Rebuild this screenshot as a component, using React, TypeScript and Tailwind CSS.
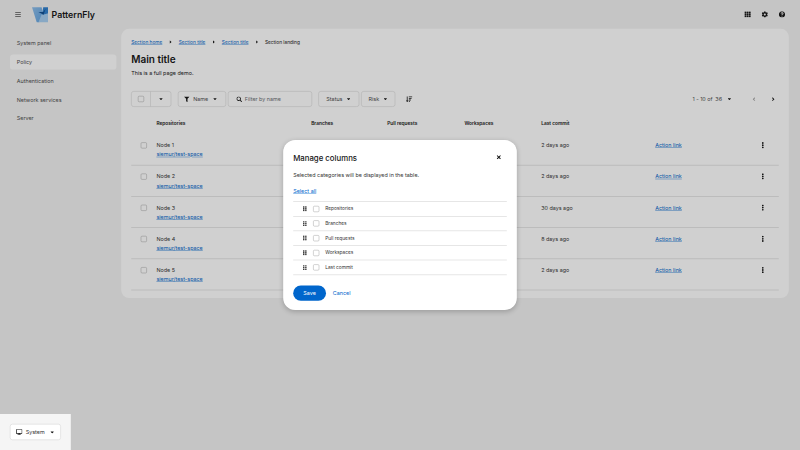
import React from 'react';
import {
  FaAngleLeft,
  FaAngleRight,
  FaBars,
  FaCaretDown,
  FaCog,
  FaDesktop,
  FaEllipsisV,
  FaFilter,
  FaGripVertical,
  FaQuestionCircle,
  FaSearch,
  FaSortAmountDown,
  FaTh,
  FaTimes,
} from 'react-icons/fa';

const navItems = ['System panel', 'Policy', 'Authentication', 'Network services', 'Server'];
const rows = [
  { name: 'Node 1', commit: '2 days ago' },
  { name: 'Node 2', commit: '2 days ago' },
  { name: 'Node 3', commit: '30 days ago' },
  { name: 'Node 4', commit: '8 days ago' },
  { name: 'Node 5', commit: '2 days ago' },
];
const columns = ['Repositories', 'Branches', 'Pull requests', 'Workspaces', 'Last commit'];
const gridCols = 'grid grid-cols-[63px_387px_190px_193px_192px_285px_268px_1fr]';

const Logo = () => (
  <svg width="40" height="40" viewBox="0 0 40 40">
    <defs>
      <linearGradient id="lg" x1="0" y1="0" x2="1" y2="1">
        <stop offset="0" stopColor="#8dbdea" />
        <stop offset="1" stopColor="#5fa2e0" />
      </linearGradient>
    </defs>
    <path d="M0 2h24l4 14-10 24h-6z" fill="url(#lg)" />
    <path d="M16 40l8-20 16-2v22z" fill="#a5cdf0" />
    <path d="M28 2h12v16l-14 3z" fill="#2e7fce" />
    <path d="M16 14l12 0 6-8-5 15z" fill="#0f4f91" />
  </svg>
);

const Checkbox = () => (
  <span className="block w-[15px] h-[15px] rounded-[3px] border border-[#8f8f8f] bg-white" />
);

const ToolbarButton: React.FC<{ children: React.ReactNode; className?: string }> = ({ children, className }) => (
  <div className={`h-[39px] flex items-center rounded-[6px] border border-[#c7c7c7] ${className ?? ''}`}>
    {children}
  </div>
);

const Crumb = () => <FaCaretDown className="w-[12px] h-[12px] mx-[14.5px] -rotate-90 text-[#151515]" />;

export default function App() {
  return (
    <div className="w-[800px] h-[450px] overflow-hidden">
      <div className="relative w-[2000px] h-[1125px] origin-top-left scale-[0.4] bg-[#f2f2f2] text-[#151515] font-['Inter','Noto_Sans',sans-serif] text-[13.5px]">
        <header className="h-[72px] flex items-center pl-[37px] pr-[37px]">
          <FaBars className="w-[16px] h-[16px] text-[#4d4d4d]" />
          <div className="ml-[27px]"><Logo /></div>
          <span className="ml-[9px] text-[22px] font-semibold">PatternFly</span>
          <div className="ml-auto flex items-center gap-[27px]">
            <FaTh className="w-[16px] h-[16px]" />
            <FaCog className="w-[16px] h-[16px]" />
            <FaQuestionCircle className="w-[16px] h-[16px]" />
          </div>
        </header>

        <div className="flex items-start">
          <nav className="w-[303px] shrink-0 pl-[25px] pr-[12px] pt-[17px] flex flex-col gap-[9px]">
            {navItems.map(item => (
              <div
                key={item}
                className={`h-[38px] px-[17px] flex items-center rounded-[8px] text-[#4d4d4d] ${item === 'Policy' ? 'bg-white' : ''}`}
              >
                {item}
              </div>
            ))}
          </nav>

          <main className="w-[1669px] h-[673px] bg-white rounded-[20px] pt-[24px] px-[25px]">
            <div className="flex items-center h-[18px] text-[12px]">
              <a className="text-[#0066cc] underline">Section home</a>
              <Crumb />
              <a className="text-[#0066cc] underline">Section title</a>
              <Crumb />
              <a className="text-[#0066cc] underline">Section title</a>
              <Crumb />
              <span>Section landing</span>
            </div>
            <h1 className="mt-[16px] text-[25px] leading-[36px] font-semibold">Main title</h1>
            <p className="mt-[6px] leading-[20px]">This is a full page demo.</p>

            <div className="mt-[36px] flex items-center">
              <ToolbarButton className="w-[100px]">
                <div className="w-[47px] flex justify-center"><Checkbox /></div>
                <div className="w-px h-full bg-[#c7c7c7]" />
                <div className="flex-1 flex justify-center"><FaCaretDown className="w-[13px] h-[13px]" /></div>
              </ToolbarButton>
              <ToolbarButton className="ml-[17px] w-[120px] pl-[14px] gap-[9px]">
                <FaFilter className="w-[14px] h-[14px]" />
                <span className="text-[#4d4d4d]">Name</span>
                <FaCaretDown className="ml-auto mr-[20px] w-[13px] h-[13px]" />
              </ToolbarButton>
              <ToolbarButton className="ml-[5px] w-[210px] pl-[20px] gap-[7px]">
                <FaSearch className="w-[14px] h-[14px]" />
                <span className="text-[#6a6e73]">Filter by name</span>
              </ToolbarButton>
              <ToolbarButton className="ml-[16px] w-[102px] justify-center gap-[9px]">
                <span className="text-[#4d4d4d]">Status</span>
                <FaCaretDown className="w-[13px] h-[13px]" />
              </ToolbarButton>
              <ToolbarButton className="ml-[5px] w-[85px] justify-center gap-[9px]">
                <span className="text-[#4d4d4d]">Risk</span>
                <FaCaretDown className="w-[13px] h-[13px]" />
              </ToolbarButton>
              <FaSortAmountDown className="ml-[27px] w-[16px] h-[16px]" />
              <div className="ml-auto flex items-center mr-[7px]">
                <span className="text-[#4d4d4d]">1 - 10 of</span>
                <span className="ml-[7px] text-[#4d4d4d]">36</span>
                <FaCaretDown className="ml-[12px] w-[13px] h-[13px]" />
                <FaAngleLeft className="ml-[48px] w-[14px] h-[14px] text-[#a3a3a3]" />
                <FaAngleRight className="ml-[34px] w-[14px] h-[14px]" />
              </div>
            </div>

            <div className="mt-[14px]">
              <div className={`${gridCols} h-[55px] items-center text-[12px] font-semibold`}>
                <span />
                {columns.map(c => <span key={c}>{c}</span>)}
              </div>
              {rows.map(r => (
                <div key={r.name} className={`${gridCols} h-[78px] items-start pt-[16px] leading-[23px] border-b-2 border-[#e0e0e0]`}>
                  <div className="pl-[24px] pt-[4px]"><Checkbox /></div>
                  <div>
                    <div className="text-[#333]">{r.name}</div>
                    <a className="text-[#0066cc] underline">siemur/test-space</a>
                  </div>
                  <span />
                  <span />
                  <span />
                  <span className="text-[#333]">{r.commit}</span>
                  <a className="text-[#0066cc] underline">Action link</a>
                  <FaEllipsisV className="-ml-[7px] mt-[3px] w-[16px] h-[16px]" />
                </div>
              ))}
            </div>
          </main>
        </div>

        <div className="absolute inset-0 bg-[#151515]/20" />

        <div className="absolute left-0 bottom-0 w-[177px] h-[90px] bg-[#f5f5f5] flex items-center pl-[25px]">
          <div className="w-[127px] h-[40px] flex items-center justify-center gap-[8px] rounded-[6px] bg-white border border-[#c7c7c7]">
            <FaDesktop className="w-[16px] h-[16px]" />
            <span className="text-[#333]">System</span>
            <FaCaretDown className="ml-[4px] w-[13px] h-[13px]" />
          </div>
        </div>

        <div role="dialog" className="absolute left-[708px] top-[350px] w-[584px] h-[425px] bg-white rounded-[30px] shadow-[0_4px_14px_rgba(0,0,0,0.2)] px-[25px] pt-[33px]">
          <div className="flex items-center justify-between h-[28px]">
            <h2 className="text-[19.5px] font-medium">Manage columns</h2>
            <FaTimes className="w-[14px] h-[14px] mr-[13px] -mt-[8px]" />
          </div>
          <p className="mt-[16px] leading-[20px] text-[#333]">Selected categories will be displayed in the table.</p>
          <a className="block mt-[20px] leading-[20px] text-[#0066cc] underline">Select all</a>
          <div className="mt-[16px] border-t-2 border-[#e0e0e0]">
            {columns.map(c => (
              <div key={c} className="h-[36.6px] flex items-center border-b-2 border-[#e0e0e0]">
                <FaGripVertical className="ml-[22px] w-[14px] h-[14px] text-[#333]" />
                <div className="ml-[14px]"><Checkbox /></div>
                <span className="ml-[15px] text-[12px] text-[#333]">{c}</span>
              </div>
            ))}
          </div>
          <div className="mt-[26px] flex items-center">
            <button className="w-[82px] h-[38px] rounded-full bg-[#0066cc] text-white">Save</button>
            <a className="ml-[17px] text-[#0066cc]">Cancel</a>
          </div>
        </div>
      </div>
    </div>
  );
}
